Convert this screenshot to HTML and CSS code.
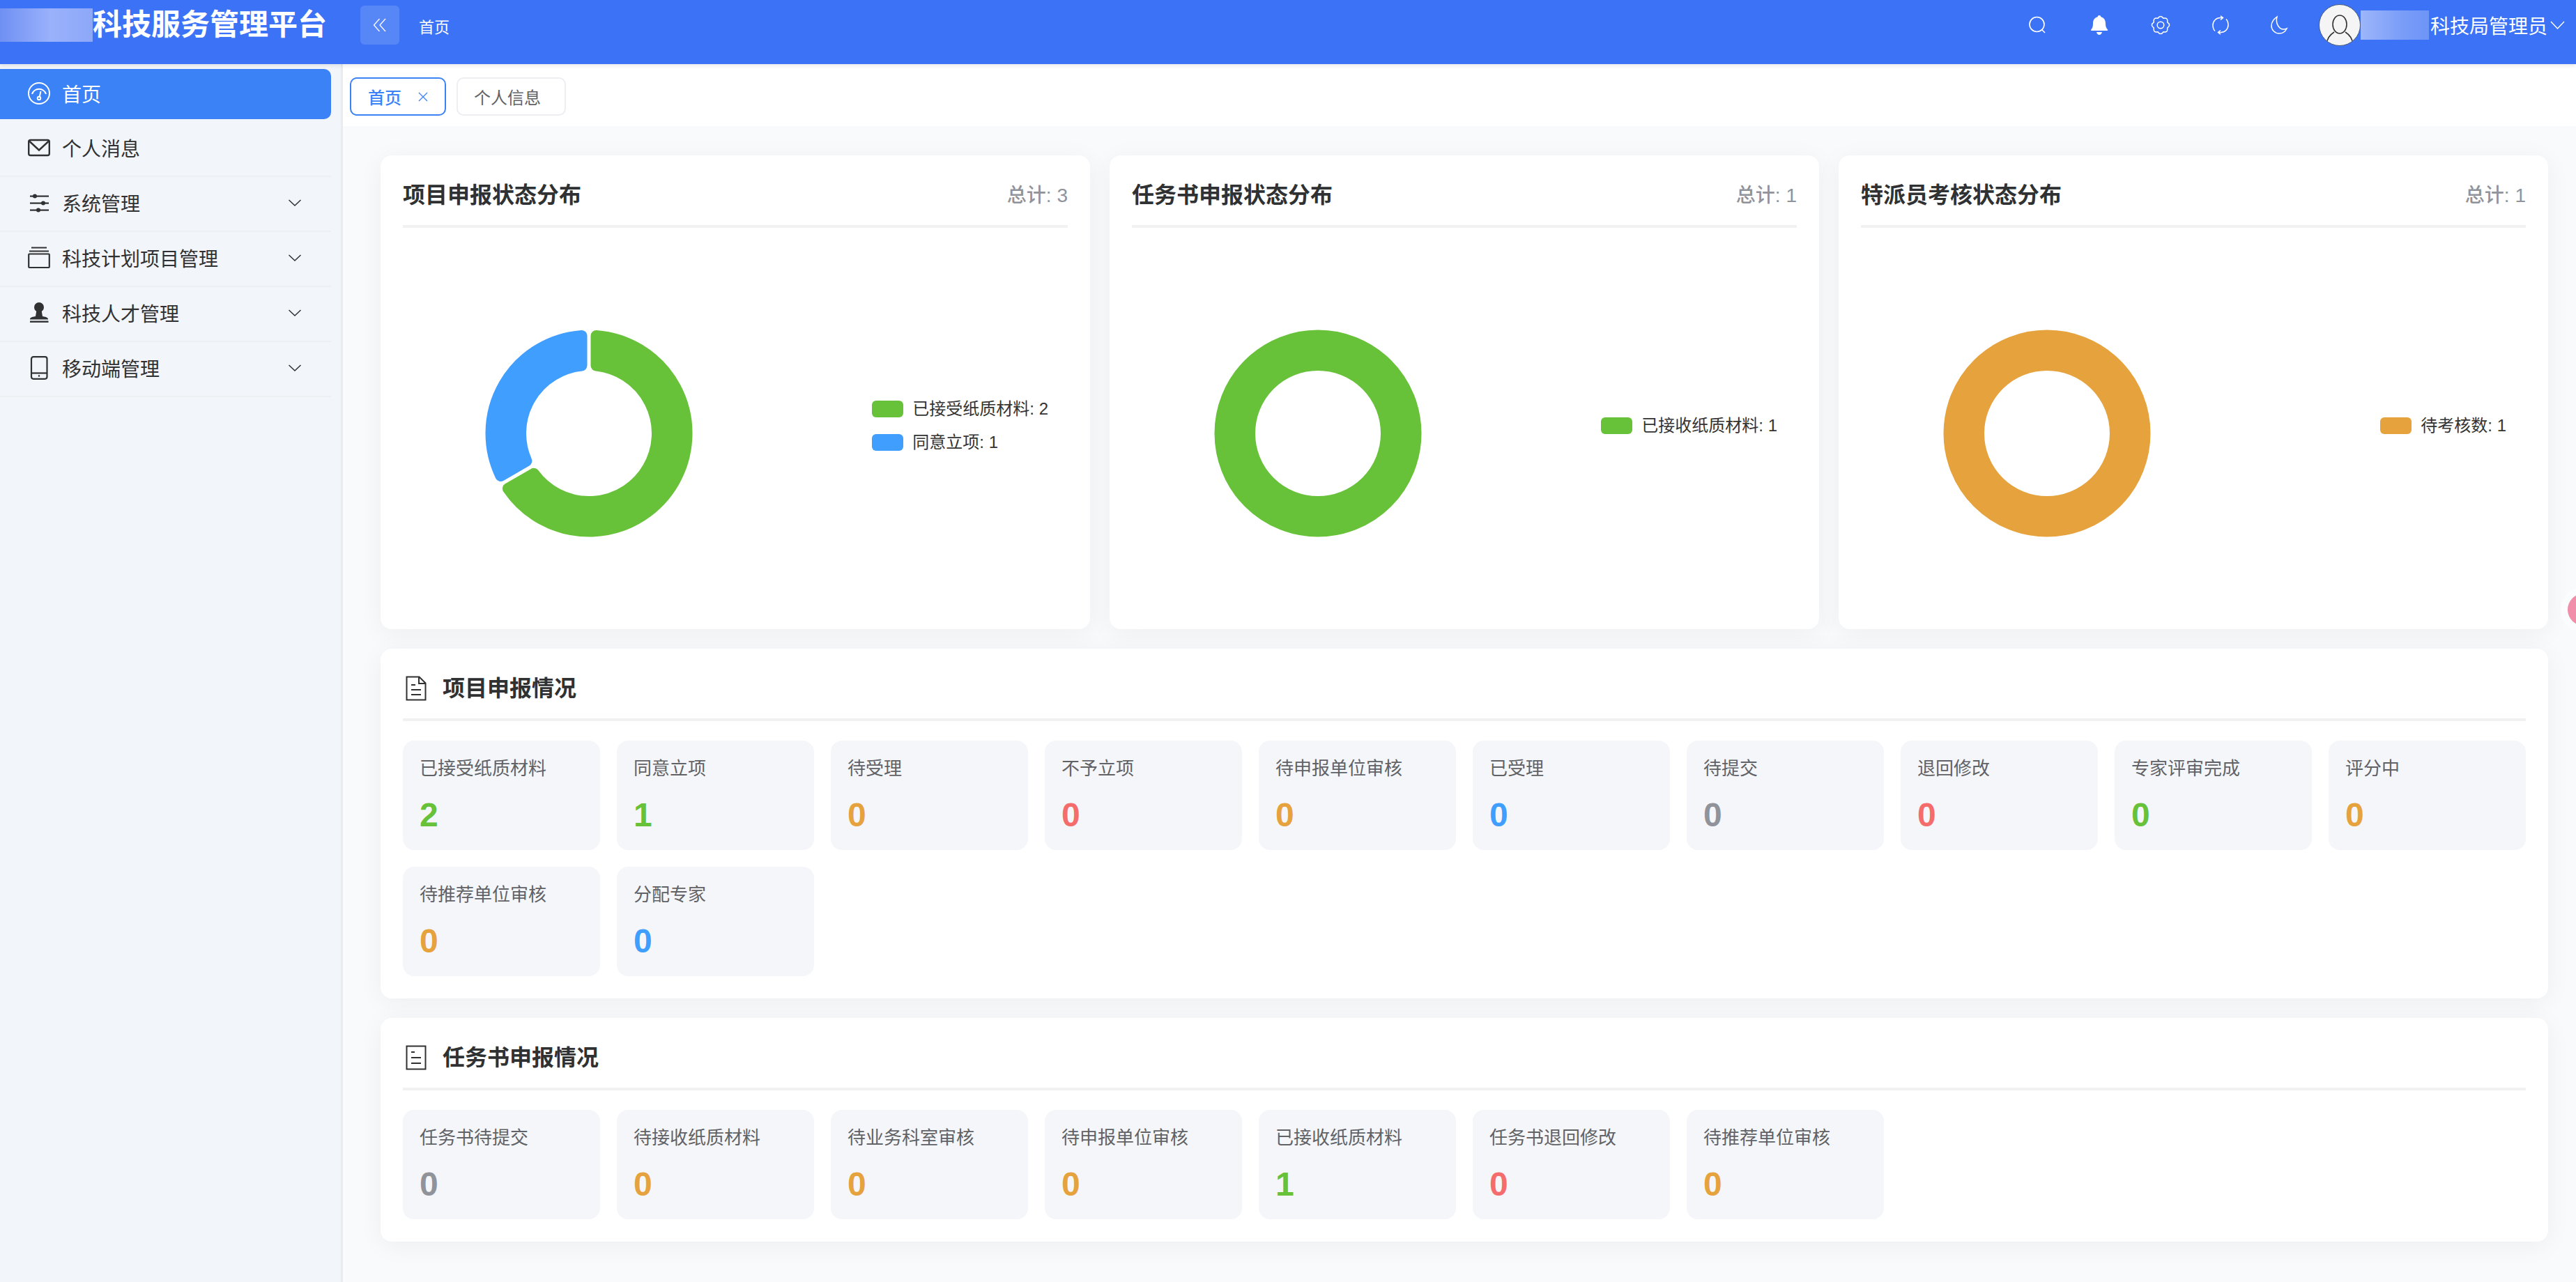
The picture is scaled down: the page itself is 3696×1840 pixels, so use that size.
FILE: index.html
```html
<!DOCTYPE html>
<html lang="zh-CN">
<head>
    <meta charset="UTF-8">
    <title>科技服务管理平台</title>
    <link rel="stylesheet" href="styles.css">
</head>
<body>
    <header class="topbar">
        <div class="logo-blur"></div>
        <div class="brand">科技服务管理平台</div>
        <button class="collapse-btn">
            <svg width="20" height="20" viewBox="0 0 20 20" fill="none" stroke="#fff" stroke-width="1.3"><path d="M9.5 1 1.5 10l8 9M18 1l-8 9 8 9"/></svg>
        </button>
        <div class="crumb">首页</div>
        <div class="top-tools">
            <svg width="34" height="28" viewBox="0 0 34 28" fill="none" stroke="#fff" stroke-width="1.6"><circle cx="16.5" cy="13" r="10.5"/><path d="m24 21 4 4"/></svg>
            <svg width="32" height="30" viewBox="0 0 32 30" fill="#fff"><path d="M16 1c1.300 0 2.200.9 2.300 2.200 4.500 1.100 6.700 4.700 6.700 9.300 0 4 .6 6.400 3 9 .5.600.2 1.500-.7 1.500H5c-1 0-1.300-.9-.7-1.500 2.300-2.600 2.700-5 2.700-9 0-4.600 2.200-8.200 6.700-9.300C13.800 1.900 14.700 1 16 1z"/><path d="M12 25h8c-.6 2.400-2.200 4-4 4s-3.400-1.600-4-4z"/></svg>
            <svg width="32" height="28" viewBox="0 0 32 28" fill="none" stroke="#fff" stroke-width="1.500"><path d="M20.020 4.300Q26.960 3.040 25.700 9.980Q31.500 14 25.700 18.020Q26.960 24.960 20.020 23.700Q16 29.500 11.980 23.700Q5.040 24.960 6.300 18.020Q.5 14 6.300 9.980Q5.040 3.040 11.980 4.300Q16 -1.500 20.020 4.300Z"/><circle cx="16" cy="14" r="4.800"/></svg>
            <svg width="28" height="28" viewBox="0 0 28 28" fill="none" stroke="#fff" stroke-width="1.500"><path d="M6 22.500C3.800 20.200 3 17.200 3 14 3 8 8 3.500 13.500 3.500h3.500M14 .8 17.500 3.500 14 6.500M22 5.500c2.200 2.300 3 5.300 3 8.500 0 6-5 10.500-10.500 10.500H11M14 27.200l-3.500-2.700 3.500-3"/></svg>
            <svg width="28" height="28" viewBox="0 0 28 28" fill="none" stroke="#fff" stroke-width="1.500"><path d="M11 2C5.500 6 3 10.500 3 15c0 6 5 11 11 11 5 0 9-2.800 11-7-1.500.8-3 1-4.500 1C13.500 20 8.500 11 11 2z"/></svg>
            <div class="avatar">
                <svg width="44" height="46" viewBox="0 0 44 46" fill="none" stroke="#333" stroke-width="1.6"><ellipse cx="22" cy="16" rx="10" ry="13"/><path d="M14 27C8 31 4 36 3.500 43M30 27c6 4 10 9 10.500 16"/></svg>
            </div>
        </div>
        <div class="user-blur"></div>
        <div class="user-name">科技局管理员</div>
        <svg class="user-caret" width="21" height="12" viewBox="0 0 21 12" fill="none" stroke="#fff" stroke-width="1.4"><path d="m1 1 9.500 10L20 1"/></svg>
    </header>

    <div class="layout">
        <aside class="sidebar">
            <div class="nav-item active">
                <svg class="nav-icon" width="32" height="32" viewBox="0 0 32 32" fill="none" stroke="#fff" stroke-width="2"><circle cx="16" cy="16" r="15"/><path d="M6 17a10.500 10.500 0 0 1 20 0"/><path d="m16.500 22 2-9"/><circle cx="16" cy="23" r="2.200"/></svg>
                <span>首页</span>
            </div>
            <div class="nav-item">
                <svg class="nav-icon" width="32" height="32" viewBox="0 0 32 32" fill="none" stroke="#303133" stroke-width="2.400"><rect x="1.200" y="5" width="29.600" height="22" rx="2.500"/><path d="m2 6.500 14 13 14-13"/></svg>
                <span>个人消息</span>
            </div>
            <div class="nav-item">
                <svg class="nav-icon" width="32" height="32" viewBox="0 0 32 32" fill="#303133"><rect x="3" y="5.500" width="27" height="2.200"/><rect x="3" y="15.500" width="27" height="2.200"/><rect x="3" y="25.500" width="27" height="2.200"/><circle cx="10" cy="6.500" r="3"/><circle cx="22" cy="16.500" r="3"/><circle cx="15" cy="26.500" r="3"/></svg>
                <span>系统管理</span>
                <svg class="nav-caret" width="18" height="10" viewBox="0 0 18 10" fill="none" stroke="#303133" stroke-width="1.500"><path d="m.5 1 8.500 8 8.500-8"/></svg>
            </div>
            <div class="nav-item">
                <svg class="nav-icon" width="32" height="32" viewBox="0 0 32 32" fill="none" stroke="#303133" stroke-width="2.200"><path d="M5 1.500h22M2 6.500h28"/><rect x="1.200" y="10.500" width="29.600" height="19.500" rx="1"/></svg>
                <span>科技计划项目管理</span>
                <svg class="nav-caret" width="18" height="10" viewBox="0 0 18 10" fill="none" stroke="#303133" stroke-width="1.500"><path d="m.5 1 8.500 8 8.500-8"/></svg>
            </div>
            <div class="nav-item">
                <svg class="nav-icon" width="32" height="32" viewBox="0 0 32 32" fill="#303133"><circle cx="16" cy="8" r="7"/><path d="M12.500 12h7l1.500 9c3 .6 7 1 8 3.500v1H3v-1c1-2.500 5-2.900 8-3.500z"/><rect x="3" y="27.500" width="26.500" height="2.400"/></svg>
                <span>科技人才管理</span>
                <svg class="nav-caret" width="18" height="10" viewBox="0 0 18 10" fill="none" stroke="#303133" stroke-width="1.500"><path d="m.5 1 8.500 8 8.500-8"/></svg>
            </div>
            <div class="nav-item">
                <svg class="nav-icon" width="32" height="34" viewBox="0 0 32 34" fill="none" stroke="#303133" stroke-width="2.200"><rect x="5" y="1.200" width="22.500" height="31.600" rx="3"/><path d="M5 24.500h22.500"/><circle cx="16" cy="28.500" r="1.300" fill="#303133" stroke="none"/></svg>
                <span>移动端管理</span>
                <svg class="nav-caret" width="18" height="10" viewBox="0 0 18 10" fill="none" stroke="#303133" stroke-width="1.500"><path d="m.5 1 8.500 8 8.500-8"/></svg>
            </div>
        </aside>

        <main class="main">
            <div class="tabbar">
                <div class="tab on">首页
                    <svg width="14" height="14" viewBox="0 0 14 14" fill="none" stroke="#3b82f6" stroke-width="1.300"><path d="m1 1 12 12M13 1 1 13"/></svg>
                </div>
                <div class="tab">个人信息</div>
            </div>

            <div class="content">
                <div class="chart-row">
                    <section class="card chart-card">
                        <div class="card-head">
                            <h3>项目申报状态分布</h3>
                            <span class="total">总计: 3</span>
                        </div>
                        <div class="chart-body">
                            <svg class="donut" width="300" height="300" viewBox="0 0 300 300">
                                <path class="slice green" d="M160.500 9.900A140.500 140.500 0 1 1 33.930 229.170L70.870 207.820A98 98 0 1 0 160.500 52.570Z"/>
                                <path class="slice blue" d="M23.410 210.950A140.500 140.500 0 0 1 139.500 9.900L139.500 52.570A98 98 0 0 0 60.370 189.620Z"/>
                            </svg>
                            <ul class="legend">
                                <li><i class="swatch bg-green"></i>已接受纸质材料: 2</li>
                                <li><i class="swatch bg-blue"></i>同意立项: 1</li>
                            </ul>
                        </div>
                    </section>
                    <section class="card chart-card">
                        <div class="card-head">
                            <h3>任务书申报状态分布</h3>
                            <span class="total">总计: 1</span>
                        </div>
                        <div class="chart-body">
                            <svg class="donut" width="300" height="300" viewBox="0 0 300 300">
                                <circle class="ring" cx="150" cy="150" r="119.250" stroke="#67c23a"/>
                            </svg>
                            <ul class="legend">
                                <li><i class="swatch bg-green"></i>已接收纸质材料: 1</li>
                            </ul>
                        </div>
                    </section>
                    <section class="card chart-card">
                        <div class="card-head">
                            <h3>特派员考核状态分布</h3>
                            <span class="total">总计: 1</span>
                        </div>
                        <div class="chart-body">
                            <svg class="donut" width="300" height="300" viewBox="0 0 300 300">
                                <circle class="ring" cx="150" cy="150" r="119.250" stroke="#e6a23c"/>
                            </svg>
                            <ul class="legend">
                                <li><i class="swatch bg-orange"></i>待考核数: 1</li>
                            </ul>
                        </div>
                    </section>
                </div>

                <section class="card stat-card">
                    <div class="card-head">
                        <h3 class="with-icon">
                            <svg width="30" height="36" viewBox="0 0 30 36" fill="none" stroke="#303133" stroke-width="2"><path d="M1.500 1.500h18l9 9v24h-27z"/><path d="M19 1.500v9.500h9.500M8 13h6M8 20h14M8 27h14"/></svg>
                            项目申报情况
                        </h3>
                    </div>
                    <div class="stat-grid">
                        <div class="tile"><p>已接受纸质材料</p><b class="green-text">2</b></div>
                        <div class="tile"><p>同意立项</p><b class="green-text">1</b></div>
                        <div class="tile"><p>待受理</p><b class="orange-text">0</b></div>
                        <div class="tile"><p>不予立项</p><b class="red-text">0</b></div>
                        <div class="tile"><p>待申报单位审核</p><b class="orange-text">0</b></div>
                        <div class="tile"><p>已受理</p><b class="blue-text">0</b></div>
                        <div class="tile"><p>待提交</p><b class="gray-text">0</b></div>
                        <div class="tile"><p>退回修改</p><b class="red-text">0</b></div>
                        <div class="tile"><p>专家评审完成</p><b class="green-text">0</b></div>
                        <div class="tile"><p>评分中</p><b class="orange-text">0</b></div>
                        <div class="tile"><p>待推荐单位审核</p><b class="orange-text">0</b></div>
                        <div class="tile"><p>分配专家</p><b class="blue-text">0</b></div>
                    </div>
                </section>

                <section class="card stat-card">
                    <div class="card-head">
                        <h3 class="with-icon">
                            <svg width="30" height="36" viewBox="0 0 30 36" fill="none" stroke="#303133" stroke-width="2"><rect x="1.500" y="1.500" width="27" height="33"/><path d="M8 10h5M8 18h14M8 26h14"/></svg>
                            任务书申报情况
                        </h3>
                    </div>
                    <div class="stat-grid">
                        <div class="tile"><p>任务书待提交</p><b class="gray-text">0</b></div>
                        <div class="tile"><p>待接收纸质材料</p><b class="orange-text">0</b></div>
                        <div class="tile"><p>待业务科室审核</p><b class="orange-text">0</b></div>
                        <div class="tile"><p>待申报单位审核</p><b class="orange-text">0</b></div>
                        <div class="tile"><p>已接收纸质材料</p><b class="green-text">1</b></div>
                        <div class="tile"><p>任务书退回修改</p><b class="red-text">0</b></div>
                        <div class="tile"><p>待推荐单位审核</p><b class="orange-text">0</b></div>
                    </div>
                </section>
            </div>
        </main>
    </div>

    <div class="float-ball"></div>
</body>
</html>
```

FILE: styles.css
```css
* {
    box-sizing: border-box;
}
body {
    margin: 0;
    width: 3696px;
    height: 1840px;
    overflow: hidden;
    position: relative;
    font-family: "Liberation Sans", "Noto Sans CJK SC", sans-serif;
    color: #303133;
    background: #f9fafb;
}

/* top bar */
.topbar {
    height: 92px;
    padding-bottom: 20px;
    display: flex;
    align-items: center;
    background: #3c73f6;
    color: #fff;
    position: relative;
    z-index: 2;
    box-shadow: 0 2px 6px rgba(0, 0, 0, 0.1);
}
.logo-blur {
    width: 133px;
    height: 48px;
    background: linear-gradient(90deg, #6f90f3, #9ab1fb 55%, #8da8f9);
}
.brand {
    font-size: 42px;
    font-weight: 700;
    line-height: 48px;
    white-space: nowrap;
    width: 336px;
}
.collapse-btn {
    width: 56px;
    height: 56px;
    margin-left: 48px;
    padding: 0;
    display: flex;
    align-items: center;
    justify-content: center;
    border: none;
    border-radius: 6px;
    background: rgba(255, 255, 255, 0.14);
}
.crumb {
    margin-left: 28px;
    font-size: 22px;
    padding-top: 1px;
}
.top-tools {
    margin-left: auto;
    display: flex;
    align-items: center;
    gap: 56px;
}
.avatar {
    width: 60px;
    height: 60px;
    margin-left: -13px;
    border-radius: 50%;
    background: #f5f5f5;
    border: 1px solid #4a5a78;
    display: flex;
    align-items: flex-end;
    justify-content: center;
    overflow: hidden;
}
.user-blur {
    width: 98px;
    height: 42px;
    background: linear-gradient(90deg, #9db6fb, #7a9df8 60%, #6d94f7);
}
.user-name {
    margin-left: 2px;
    font-size: 28px;
    white-space: nowrap;
}
.user-caret {
    margin-left: 4px;
    margin-right: 16px;
}

/* sidebar */
.layout {
    display: flex;
    height: 1748px;
}
.sidebar {
    width: 492px;
    flex-shrink: 0;
    padding: 7px 14px 0 0;
    background: #f2f5f9;
    border-right: 3px solid #e9ecef;
}
.nav-item {
    height: 79px;
    padding: 0 0 3px 40px;
    display: flex;
    align-items: center;
    font-size: 28px;
    color: #303133;
    border-bottom: 2px solid #edf0f3;
}
.nav-item.active {
    height: 72px;
    margin-bottom: 4px;
    color: #fff;
    background: #3b82f6;
    border-bottom: none;
    border-radius: 0 10px 10px 0;
}
.nav-icon {
    flex-shrink: 0;
    margin-right: 17px;
}
.nav-caret {
    margin-left: auto;
    margin-right: 43px;
}

/* tabs */
.main {
    flex: 1;
    min-width: 0;
}
.tabbar {
    height: 89px;
    padding: 19px 0 0 10px;
    display: flex;
    align-items: flex-start;
    gap: 15px;
    background: #fff;
}
.tab {
    height: 55px;
    padding: 0 34px 0 23px;
    display: flex;
    align-items: center;
    gap: 24px;
    font-size: 24px;
    color: #606266;
    border: 2px solid #eceef2;
    border-radius: 10px;
    background: #fff;
}
.tab.on {
    padding: 0 24px;
    color: #3b82f6;
    font-weight: 500;
    border-color: #3b82f6;
}

/* cards */
.content {
    padding: 42px 40px 0 54px;
    display: flex;
    flex-direction: column;
    gap: 28px;
}
.card {
    background: #fff;
    border-radius: 16px;
    box-shadow: 0 6px 36px rgba(0, 0, 0, 0.05);
}
.chart-row {
    display: flex;
    gap: 28px;
}
.chart-card {
    flex: 1;
    height: 680px;
    padding: 32px 32px 0;
    display: flex;
    flex-direction: column;
}
.stat-card {
    padding: 32px;
}
.card-head {
    height: 72px;
    padding-bottom: 18px;
    display: flex;
    align-items: center;
    justify-content: space-between;
    border-bottom: 4px solid #f1f1f2;
}
.card-head h3 {
    margin: 0;
    font-size: 32px;
    line-height: 50px;
    font-weight: 700;
    color: #303133;
}
.card-head .with-icon {
    display: flex;
    align-items: center;
    gap: 23px;
    padding-left: 4px;
}
.total {
    font-size: 28px;
    font-weight: 500;
    color: #909399;
    padding-bottom: 4px;
}

/* donuts */
.chart-body {
    flex: 1;
    padding: 0 28px 0 117px;
    display: flex;
    align-items: center;
    justify-content: space-between;
}
.donut {
    margin-top: 14px;
}
.slice {
    stroke-width: 16;
    stroke-linejoin: round;
}
.slice.green {
    fill: #67c23a;
    stroke: #67c23a;
}
.slice.blue {
    fill: #409eff;
    stroke: #409eff;
}
.ring {
    fill: none;
    stroke-width: 58.5;
}
.legend {
    list-style: none;
    margin: 0 0 8px;
    padding: 0;
    display: flex;
    flex-direction: column;
    gap: 24px;
    font-size: 24px;
    line-height: 24px;
    color: #333;
}
.legend li {
    display: flex;
    align-items: center;
    gap: 13px;
    white-space: nowrap;
}
.swatch {
    width: 45px;
    height: 24px;
    border-radius: 6px;
}
.bg-green {
    background: #67c23a;
}
.bg-blue {
    background: #409eff;
}
.bg-orange {
    background: #e6a23c;
}

/* stat tiles */
.stat-grid {
    margin-top: 28px;
    display: grid;
    grid-template-columns: repeat(10, 1fr);
    gap: 24px;
}
.tile {
    height: 157px;
    padding: 24px;
    border-radius: 16px;
    background: #f5f6fa;
}
.tile p {
    margin: 0;
    font-size: 26px;
    line-height: 32px;
    color: #606266;
    white-space: nowrap;
}
.tile b {
    display: block;
    margin-top: 23px;
    font-size: 48px;
    line-height: 56px;
    font-weight: 700;
}
.green-text {
    color: #67c23a;
}
.orange-text {
    color: #e6a23c;
}
.red-text {
    color: #f56c6c;
}
.blue-text {
    color: #409eff;
}
.gray-text {
    color: #909399;
}

/* pink ball stuck to the right edge */
.float-ball {
    position: absolute;
    left: 3684px;
    top: 852px;
    width: 46px;
    height: 46px;
    border-radius: 50%;
    background: #f18fab;
    box-shadow: 0 0 0 10px #fbfcfd;
}
```
